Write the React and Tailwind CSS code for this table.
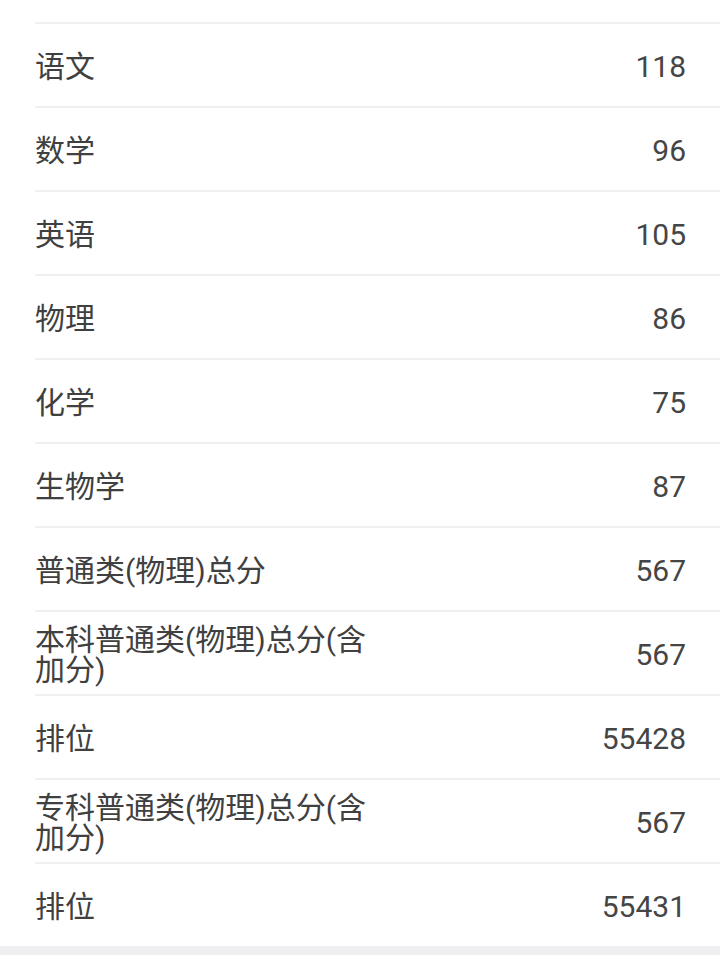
const rows = [
  { name: "语文", score: "118" },
  { name: "数学", score: "96" },
  { name: "英语", score: "105" },
  { name: "物理", score: "86" },
  { name: "化学", score: "75" },
  { name: "生物学", score: "87" },
  { name: "普通类(物理)总分", score: "567" },
  { name: "本科普通类(物理)总分(含加分)", score: "567" },
  { name: "排位", score: "55428" },
  { name: "专科普通类(物理)总分(含加分)", score: "567" },
  { name: "排位", score: "55431" },
];

export default function App() {
  return (
    <div
      className="min-h-[955px] bg-[#efeff1] text-[#404040]"
      style={{ fontFamily: 'Roboto, "Noto Sans CJK SC", sans-serif' }}
    >
      {/* 成绩列表 */}
      <div className="bg-white pl-[35px] pt-[22px]">
        {rows.map((row, i) => (
          <div
            key={i}
            className="flex h-[84px] items-center justify-between border-t-2 border-[#f0f0f0] pt-[3px] pr-[34px]"
          >
            <div className="w-[340px] text-[30px] leading-[30px]">{row.name}</div>
            <div className="text-[30px] leading-[30px] text-[#454545]">{row.score}</div>
          </div>
        ))}
      </div>
    </div>
  );
}
